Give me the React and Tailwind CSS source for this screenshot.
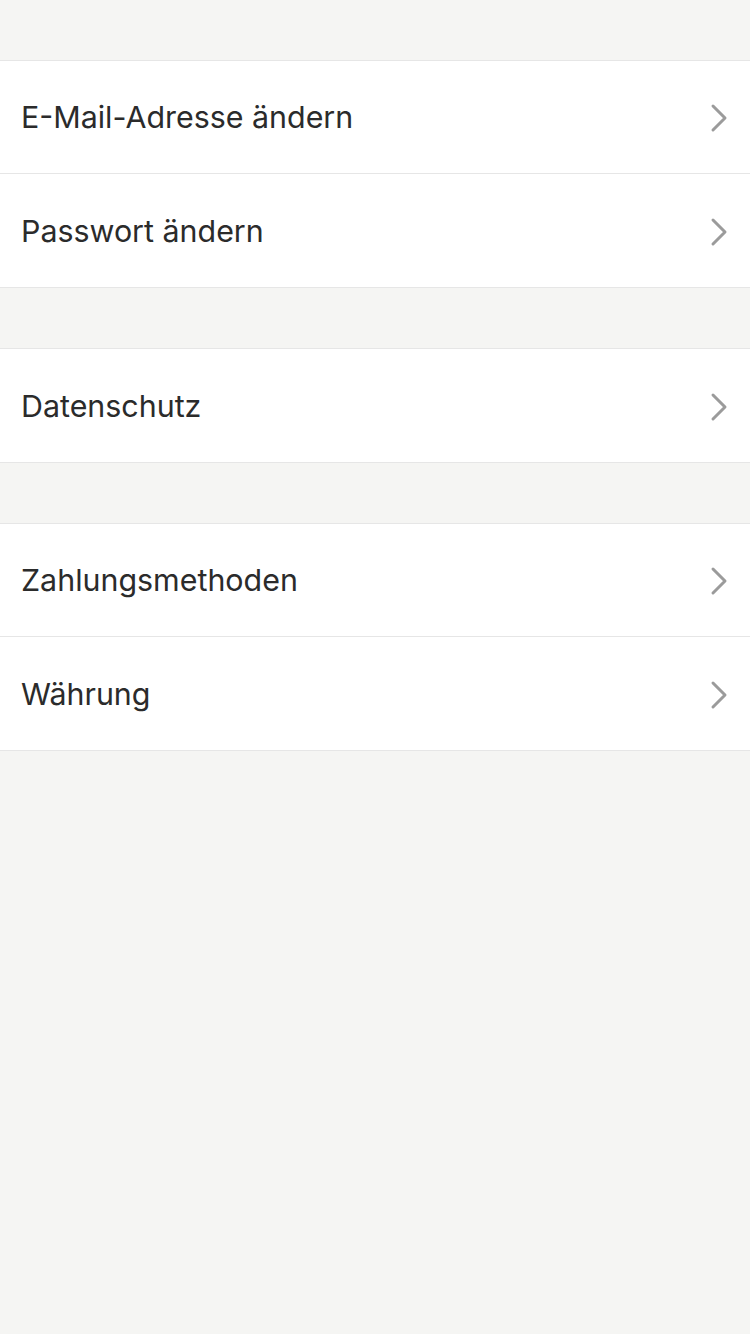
import React from "react";

const groups = [
  ["E-Mail-Adresse ändern", "Passwort ändern"],
  ["Datenschutz"],
  ["Zahlungsmethoden", "Währung"],
];

function Chevron() {
  return (
    <svg width="18" height="30" viewBox="0 0 18 30" fill="none">
      <path d="M3 3 L15 15 L3 27" stroke="#9b9b9b" strokeWidth="3" strokeLinecap="round" strokeLinejoin="round" />
    </svg>
  );
}

function Row({ label, last }) {
  return (
    <div className={"flex items-center justify-between h-[113px] pl-[21px] pr-[22px] pt-[2px] bg-white " + (last ? "" : "border-b border-[#e6e6e6]")}>
      <span className="text-[30.4px] text-[#2b2b2b] font-['Inter',sans-serif]">{label}</span>
      <Chevron />
    </div>
  );
}

export default function App() {
  return (
    <div className="min-h-[1334px] bg-[#f5f5f3] flex flex-col">
      {groups.map((g, i) => (
        <div key={i} className="mt-[60px] border-t border-b border-[#e6e6e6] bg-white">
          {g.map((label, j) => (
            <Row key={label} label={label} last={j === g.length - 1} />
          ))}
        </div>
      ))}
    </div>
  );
}
